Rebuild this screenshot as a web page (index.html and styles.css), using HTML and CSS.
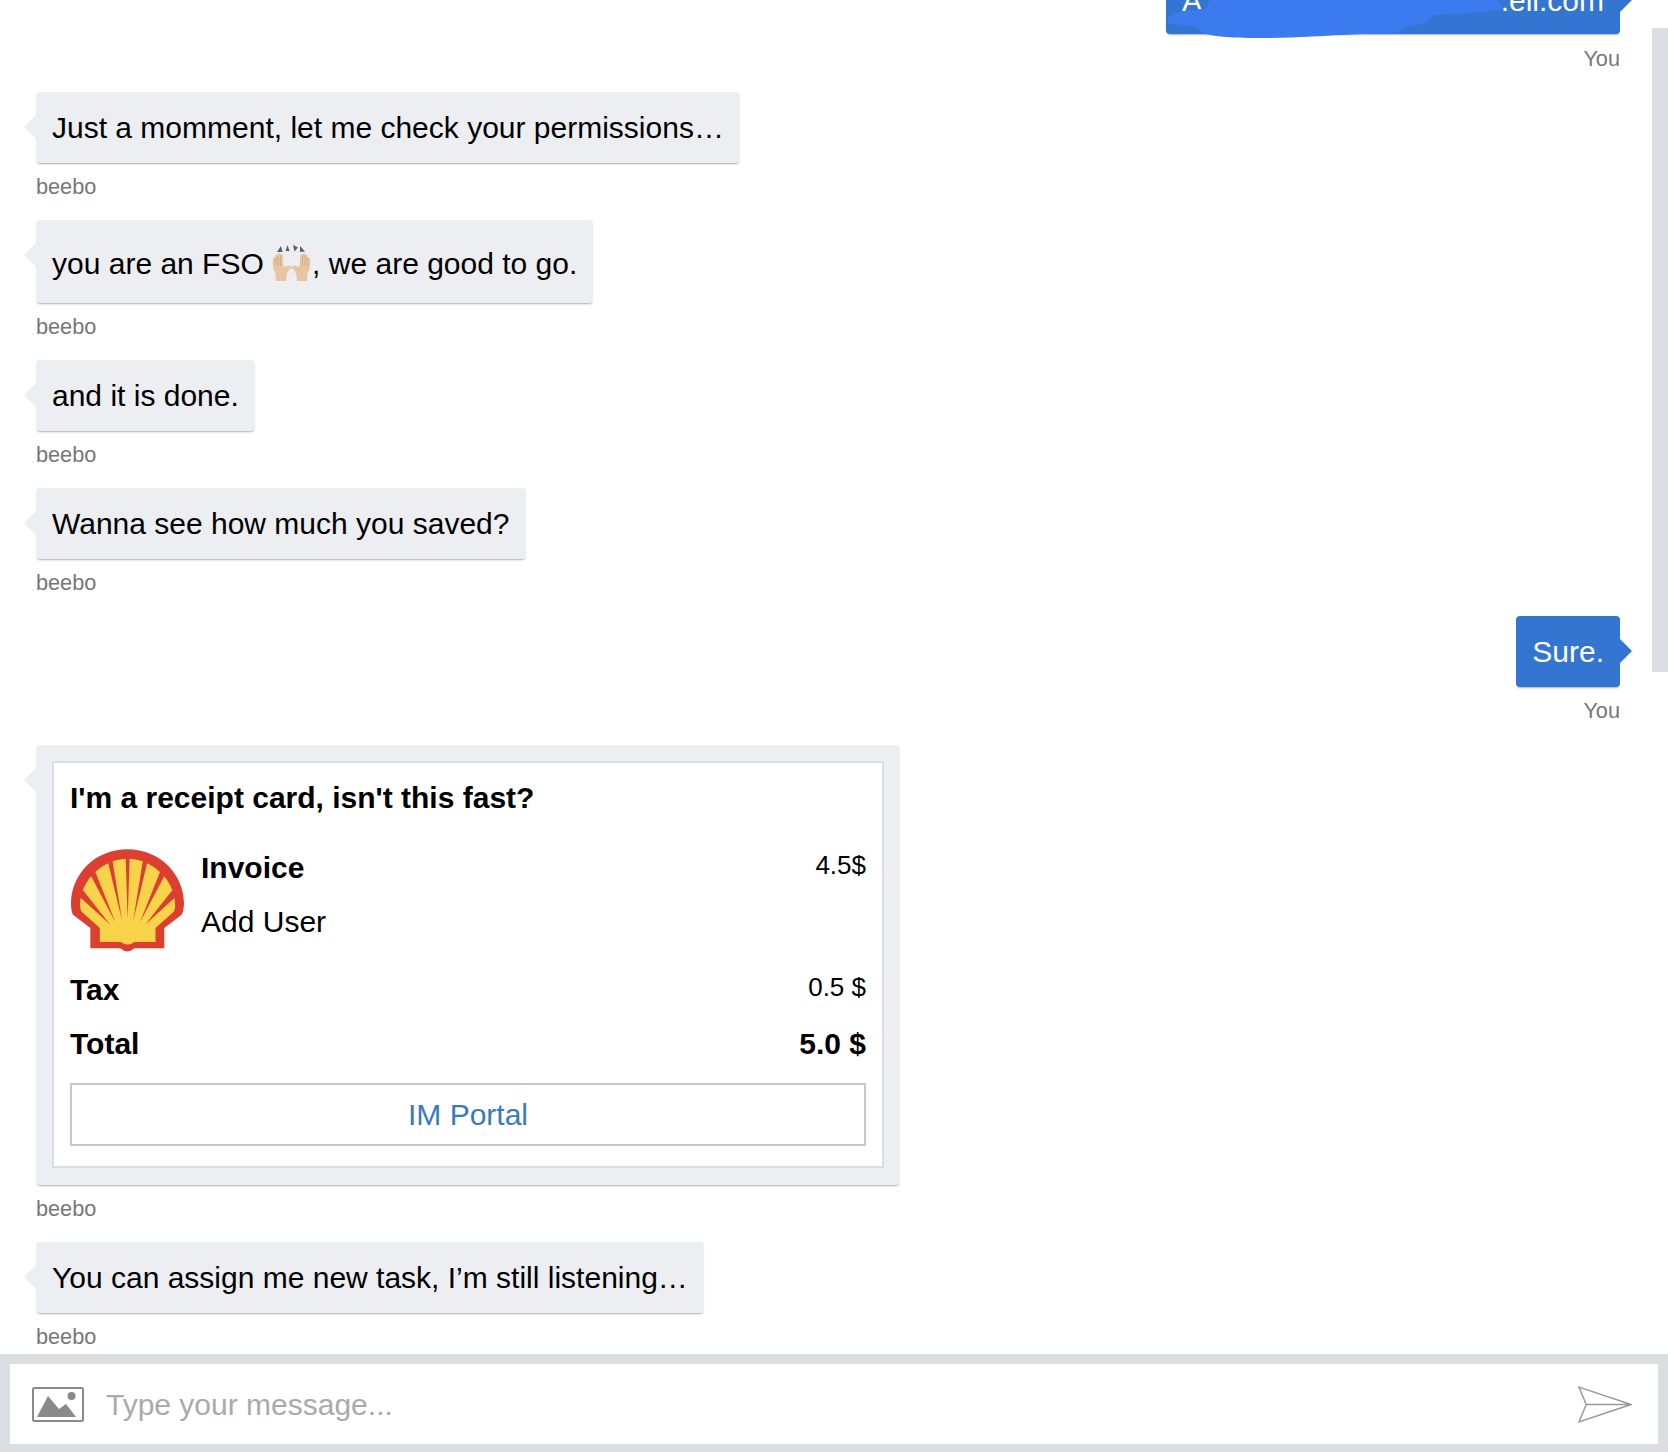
FILE: index.html
```html
<!DOCTYPE html>
<html lang="en">
<head>
<meta charset="utf-8">
<title>beebo</title>
<link rel="stylesheet" href="styles.css">
</head>
<body>
<div class="app">
  <main class="thread">
    <div class="msg out msg-redacted">
      <div class="bubble bubble-redacted"><span class="redacted-line"><span>A</span><span>.ell.com</span></span>
        <svg class="scribble" viewBox="1166 -4 340 42"><path fill="#3b7bef" d="M1210-4H1495L1503 9C1490 11 1480 12 1470 13L1433 15L1427 23L1407 27L1397 33L1360 34C1320 36 1290 38 1260 38C1230 38 1210 36 1203 33L1197 27L1167 23L1168 17L1180 12L1207 8Z"/></svg>
      </div>
      <div class="who">You</div>
    </div>
    <div class="msg in">
      <div class="bubble">Just a momment, let me check your permissions…</div>
      <div class="who">beebo</div>
    </div>
    <div class="msg in">
      <div class="bubble">you are an FSO <svg class="emoji" viewBox="0 -8 40 47">
        <g fill="#e6c6a2">
          <path d="M4 35L3.500 27C1.500 24 .5 20 .8 16L1.200 12C1.600 10.500 3 10.500 3.300 12L3.500 9.500C3.900 8 5.300 8 5.700 9.500L6 8C6.400 6.600 7.800 6.600 8.200 8L8.500 9C8.900 7.800 10.300 7.800 10.700 9L11.500 20C12.500 22 15 19 17 19.500C19 20 20 21 20 22C17 23 15.500 26 14.500 29L14 35Z"/>
          <path d="M35 35L35.500 27C37.500 24 38.500 20 38.200 16L37.800 12C37.400 10.500 36 10.500 35.700 12L35.500 9.500C35.100 8 33.700 8 33.300 9.500L33 8C32.600 6.600 31.200 6.600 30.800 8L30.500 9C30.100 7.800 28.700 7.800 28.300 9L27.500 20C26.500 22 24 19 22 19.500C20 20 19 21 19 22C22 23 23.500 26 24.500 29L25 35Z"/>
        </g>
        <g fill="none" stroke="#c9a27a" stroke-width=".7">
          <path d="M3.500 12L4 20M5.900 9.500L6.300 20M8.400 9L8.600 20"/>
          <path d="M35.500 12L35 20M33.100 9.500L32.700 20M30.600 9L30.400 20"/>
        </g>
        <g fill="#56606a"><path d="M5 6L9 0L10.500 6Z"/><path d="M13.500 5L15.500 -1L17.500 5Z"/><path d="M21 -1L26 1.500L22.500 5.500Z"/><path d="M28 0L33 5.500L28 6Z"/></g>
      </svg>, we are good to go.</div>
      <div class="who">beebo</div>
    </div>
    <div class="msg in">
      <div class="bubble">and it is done.</div>
      <div class="who">beebo</div>
    </div>
    <div class="msg in">
      <div class="bubble">Wanna see how much you saved?</div>
      <div class="who">beebo</div>
    </div>
    <div class="msg out">
      <div class="bubble">Sure.</div>
      <div class="who">You</div>
    </div>
    <div class="msg in msg-card">
      <div class="bubble bubble-card">
        <div class="receipt">
          <div class="receipt-title">I'm a receipt card, isn't this fast?</div>
          <div class="receipt-item">
            <svg class="logo" viewBox="35 30 333 305">
              <path fill="#dc3e30" d="M201 30C105 30 35 105 35 190C35 200 36 210 40 222L92 262V322H180Q201 340 222 322H310V262L362 222C366 210 368 200 368 190C368 105 298 30 201 30Z"/>
              <path fill="#f9d44b" d="M202 58C130 58 62 120 62 195C62 205 64 212 68 216L120 262V303H182Q202 318 222 303H284V262L336 216C340 212 342 205 342 195C342 120 274 58 202 58Z"/>
              <g fill="#dc3e30">
                <path d="M202 238L196 50H208Z"/>
                <path d="M186 242L142 60L156 56Z"/>
                <path d="M218 242L248 56L262 60Z"/>
                <path d="M166 246L92 105L106 95Z"/>
                <path d="M238 246L298 95L312 105Z"/>
                <path d="M150 252L60 170L70 150Z"/>
                <path d="M254 252L334 150L344 170Z"/>
              </g>
            </svg>
            <div class="item-text">
              <div class="item-name">Invoice</div>
              <div class="item-sub">Add User</div>
            </div>
            <div class="amount amount-item">4.5$</div>
          </div>
          <div class="line line-tax"><span class="line-label">Tax</span><span class="amount">0.5 $</span></div>
          <div class="line line-total"><span class="line-label">Total</span><span class="total-value">5.0 $</span></div>
          <div class="portal">IM Portal</div>
        </div>
      </div>
      <div class="who">beebo</div>
    </div>
    <div class="msg in">
      <div class="bubble">You can assign me new task, I’m still listening…</div>
      <div class="who">beebo</div>
    </div>
  </main>
  <div class="scrollbar"></div>
  <footer class="composer">
    <div class="composer-box">
      <svg class="icon-image" viewBox="0 0 52 35">
        <rect x="1" y="1" width="50" height="33" rx="1.500" fill="none" stroke="#8a8a8a" stroke-width="2"/>
        <path fill="#8a8a8a" d="M5 30L16 9L27 22L34 17L44 30Z"/>
        <circle cx="39.500" cy="9" r="4" fill="#8a8a8a"/>
      </svg>
      <input class="message-input" type="text" placeholder="Type your message...">
      <svg class="icon-send" viewBox="0 0 56 38">
        <path fill="none" stroke="#999" stroke-width="1.500" d="M1 1L55 19L1 37L8.500 19ZM8.500 19H55"/>
      </svg>
    </div>
  </footer>
</div>
</body>
</html>
```
FILE: styles.css
```css
* { box-sizing: border-box; }
html, body { margin: 0; height: 100%; background: #fff; }
body { font-family: "Liberation Sans", Arial, sans-serif; color: #000; }

.app {
  position: relative;
  height: 1452px;
  display: flex;
  flex-direction: column;
  overflow: hidden;
}

.thread {
  flex: 1;
  min-height: 0;
  overflow: hidden;
  display: flex;
  flex-direction: column;
  justify-content: flex-end;
  gap: 17px;
  padding: 0 48px 1px 36px;
}

.msg { display: flex; flex-direction: column; flex: none; }
.msg.in { align-items: flex-start; }
.msg.out { align-items: flex-end; }
.msg-card { margin-top: 1px; }
.msg-redacted .who { margin-top: 9px; }

.bubble {
  position: relative;
  padding: 18px 16px;
  font-size: 30px;
  line-height: 35px;
  white-space: nowrap;
  border-radius: 4px;
  background: #eceef1;
  box-shadow: 0 2px 2px -1px rgba(0, 0, 0, .32);
}
.bubble::before {
  content: "";
  position: absolute;
  top: 23px;
  width: 12px;
  height: 24px;
}
.in .bubble::before {
  left: -12px;
  background: #eceef1;
  clip-path: polygon(100% 0, 0 50%, 100% 100%);
}
.out .bubble { background: #3375d0; color: #fff; }
.out .bubble::before {
  right: -12px;
  background: #3375d0;
  clip-path: polygon(0 0, 100% 50%, 0 100%);
}

.bubble-redacted { padding-bottom: 16px; }
.redacted-line { display: flex; justify-content: space-between; width: 422px; }
.scribble {
  position: absolute;
  left: 0;
  bottom: -4px;
  width: 340px;
  height: 42px;
}

.emoji {
  width: 40px;
  height: 47px;
  vertical-align: -11px;
}

.who {
  margin-top: 8px;
  font-size: 21.700px;
  line-height: 32px;
  color: #777;
}

.bubble-card { width: 864px; padding: 16px 16px 17px; }

.receipt {
  display: flex;
  flex-direction: column;
  padding: 18px 16px 20px;
  background: #fff;
  border: 2px solid #d6dee6;
}
.receipt-title { font-weight: 700; line-height: 34px; }

.receipt-item {
  display: flex;
  align-items: flex-start;
  margin-top: 34px;
}
.logo { width: 113px; height: 104px; flex: none; margin: 0 17px 0 1px; }
.item-text {
  flex: 1;
  display: flex;
  flex-direction: column;
  gap: 20px;
  margin-top: 2px;
}
.item-name { font-weight: 700; line-height: 34px; }
.item-sub { line-height: 34px; }

.amount { font-size: 26px; line-height: 30px; }
.amount-item { margin-top: 1px; }

.line {
  display: flex;
  justify-content: space-between;
  align-items: center;
  line-height: 34px;
}
.line-label { font-weight: 700; }
.line-tax { margin-top: 20px; }
.line-tax .amount { position: relative; top: -3px; }
.line-total { margin-top: 20px; }
.total-value { font-weight: 700; }

.portal {
  margin-top: 22px;
  height: 63px;
  display: flex;
  align-items: center;
  justify-content: center;
  border: 2px solid #c8c8c8;
  color: #3a78c2;
}

.scrollbar {
  position: absolute;
  top: 28px;
  right: 0;
  width: 16px;
  height: 644px;
  background: #dcdde0;
}

.composer {
  flex: none;
  height: 98px;
  padding: 10px 10px 8px;
  background: #dcdde0;
}
.composer-box {
  height: 80px;
  display: flex;
  align-items: center;
  padding: 0 26px 0 22px;
  background: #fff;
}
.icon-image { width: 52px; height: 35px; flex: none; }
.message-input {
  flex: 1;
  min-width: 0;
  margin: 2px 22px 0;
  padding: 0;
  border: 0;
  outline: 0;
  background: transparent;
  font: 30px "Liberation Sans", Arial, sans-serif;
  color: #000;
}
.message-input::placeholder { color: #aaa; opacity: 1; }
.icon-send { width: 54px; height: 37px; flex: none; }
```
